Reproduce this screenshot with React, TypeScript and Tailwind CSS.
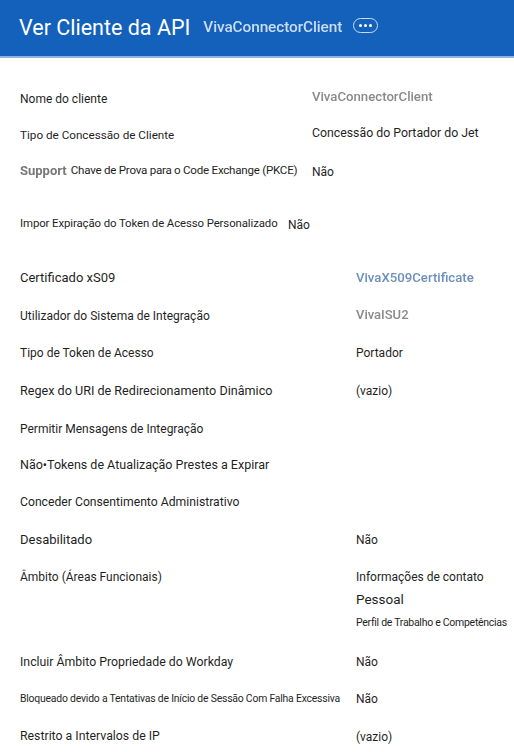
const font = "font-['Roboto',sans-serif]";

type Row = {
  label: React.ReactNode;
  value?: React.ReactNode;
  h: string;
  labelW: string;
  labelCls?: string;
  valueCls?: string;
};

const std = "w-[336px]";
const base = "text-[12px] text-[#1f1f1f]";

const rows: Row[] = [
  { label: "Nome do cliente", value: "VivaConnectorClient", h: "h-[37px]", labelW: "w-[292px]", labelCls: "pt-[2px]", valueCls: "pb-[2px] text-[13.2px] font-medium text-[#8a8a8a] blur-[0.4px]" },
  { label: <span className="text-[11.7px]">Tipo de Concessão de Cliente</span>, value: "Concessão do Portador do Jet", h: "h-[37px]", labelW: "w-[292px]", labelCls: "pt-[2px]", valueCls: "pb-[2px] text-[12.3px]" },
  {
    label: (
      <span className="flex items-center gap-[4px]">
        <span className="text-[13px] font-bold text-[#777] blur-[0.4px]">Support</span>
        <span className="text-[11.6px] tracking-[-0.25px]">Chave de Prova para o Code Exchange (PKCE)</span>
      </span>
    ),
    value: "Não", h: "h-[36px]", labelW: "w-[292px]", labelCls: "pb-[1px]", valueCls: "pt-[2px]",
  },
  { label: <span className="text-[11.4px] tracking-[-0.1px]">Impor Expiração do Token de Acesso Personalizado</span>, value: "Não", h: "h-[70px]", labelW: "w-[268px]", labelCls: "pb-[2px]", valueCls: "pt-[1px]" },
  { label: <span className="text-[13px]">Certificado xS09</span>, value: "VivaX509Certificate", h: "h-[38px]", labelW: std, valueCls: "text-[13.2px] font-medium text-[#6d90ba] blur-[0.4px]" },
  { label: "Utilizador do Sistema de Integração", value: "VivaISU2", h: "h-[38px]", labelW: std, valueCls: "pb-[2px] text-[13px] font-medium text-[#8a8a8a] blur-[0.4px]" },
  { label: "Tipo de Token de Acesso", value: "Portador", h: "h-[36px]", labelW: std },
  { label: <span className="text-[12.6px]">Regex do URI de Redirecionamento Dinâmico</span>, value: "(vazio)", h: "h-[40px]", labelW: std },
  { label: "Permitir Mensagens de Integração", h: "h-[36px]", labelW: std },
  { label: <span className="text-[12.5px]">Não•Tokens de Atualização Prestes a Expirar</span>, h: "h-[37px]", labelW: std },
  { label: <span className="text-[12.2px]">Conceder Consentimento Administrativo</span>, h: "h-[37px]", labelW: std },
  { label: <span className="text-[13px]">Desabilitado</span>, value: "Não", h: "h-[38px]", labelW: std },
];

const rowsAfter: Row[] = [
  { label: <span className="text-[12.3px]">Incluir Âmbito Propriedade do Workday</span>, value: "Não", h: "h-[36px]", labelW: std },
  { label: <span className="text-[10.4px] tracking-[-0.2px]">Bloqueado devido a Tentativas de Início de Sessão Com Falha Excessiva</span>, value: "Não", h: "h-[37px]", labelW: std, labelCls: "pb-[2px]", valueCls: "pt-[1px]" },
  { label: <span className="text-[12.3px]">Restrito a Intervalos de IP</span>, value: "(vazio)", h: "h-[39px]", labelW: std },
];

function InfoRow({ r }: { r: Row }) {
  return (
    <div className={`flex items-center pl-5 ${r.h} ${base}`}>
      <div className={`${r.labelW} shrink-0 whitespace-nowrap ${r.labelCls ?? ""}`}>{r.label}</div>
      {r.value && <div className={r.valueCls ?? ""}>{r.value}</div>}
    </div>
  );
}

export default function App() {
  return (
    <div className={`w-[514px] h-[752px] overflow-hidden bg-white ${font}`}>
      <header className="h-[58px] flex items-center pl-[19px] bg-[#1461bb] border-b-2 border-[#8fb4de]">
        <h1 className="text-[21.5px] leading-none text-white">Ver Cliente da API</h1>
        <span className="ml-[13px] text-[15.4px] font-medium text-[#c9dcf2] blur-[0.4px] tracking-[-0.1px]">VivaConnectorClient</span>
        <span className="ml-[11px] mb-[5px] w-[25px] h-[15px] rounded-full border border-[#c9dcf2] flex items-center justify-center gap-[2px]">
          <i className="w-[3px] h-[3px] rounded-full bg-white" />
          <i className="w-[3px] h-[3px] rounded-full bg-white" />
          <i className="w-[3px] h-[3px] rounded-full bg-white" />
        </span>
      </header>
      <main className="pt-[21px]">
        {rows.map((r, i) => <InfoRow key={i} r={r} />)}
        <div className={`flex pl-5 h-[85px] ${base}`}>
          <div className={`${std} shrink-0 pt-[9px]`}>Âmbito (Áreas Funcionais)</div>
          <div className="flex flex-col pt-[9px]">
            <span className="leading-[18px]">Informações de contato</span>
            <span className="text-[13.5px] leading-[18px] mt-[4px]">Pessoal</span>
            <span className="text-[10.5px] leading-[14px] mt-[8px] tracking-[-0.28px] whitespace-nowrap">Perfil de Trabalho e Competências</span>
          </div>
        </div>
        {rowsAfter.map((r, i) => <InfoRow key={i} r={r} />)}
      </main>
    </div>
  );
}
